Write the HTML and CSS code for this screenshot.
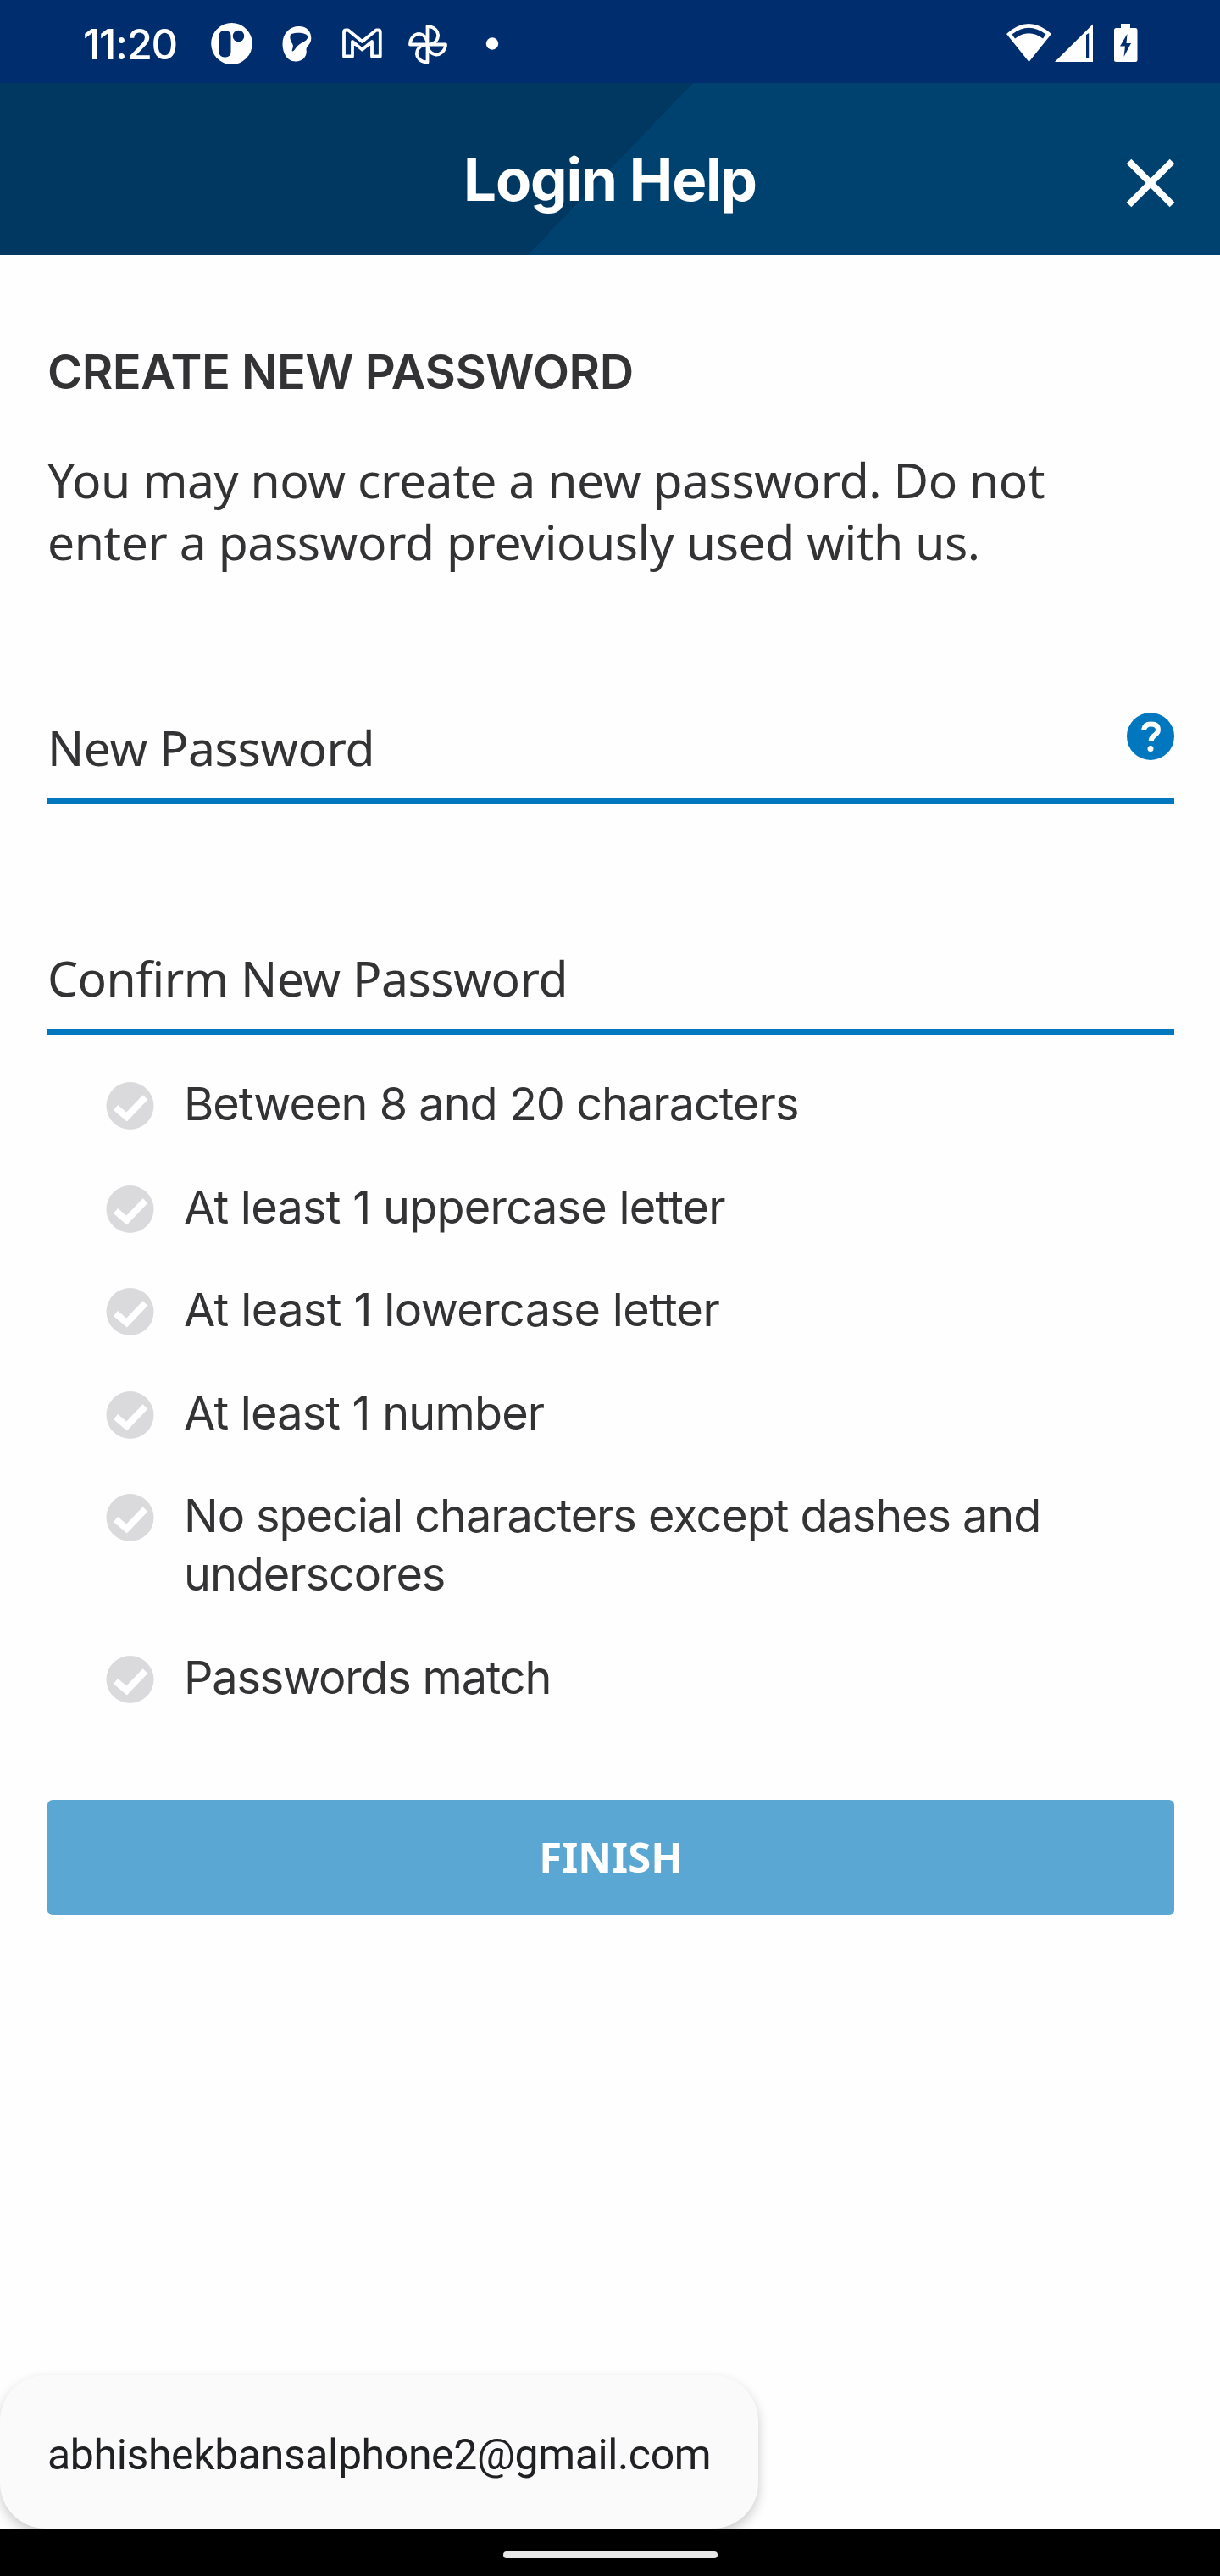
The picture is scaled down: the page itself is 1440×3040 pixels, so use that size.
FILE: index.html
```html
<!DOCTYPE html>
<html lang="en">
<head>
<meta charset="utf-8">
<title>Login Help</title>
<link rel="stylesheet" href="styles.css">
</head>
<body>
<div class="screen">
  <div class="status">
    <span class="clock">11:20</span>
    <svg class="status-left" width="350" height="98" viewBox="240 0 350 98" fill="none">
      <ellipse cx="273.500" cy="51.500" rx="24.300" ry="24.500" fill="#fff"/>
      <rect x="258.500" y="36" width="14" height="31.500" rx="6" fill="#002d6e"/>
      <circle cx="281.500" cy="42.500" r="6.800" fill="#002d6e"/>
      <path d="M353 31C362 31 367.300 37 367.300 45C367.300 52 362 54 361.500 58C363 66 358 72.500 349 72.500C338 72.500 333.500 61 333.500 52C333.500 39 342 31 353 31Z" fill="#fff"/>
      <path d="M344 40C351 38 361 38.500 363 42.500C364 48.500 357 49 352 53.500C349 56 347 61 345 60.500C343.500 59.500 347.500 55 345 51.500C342 47 341.500 41 344 40Z" fill="#002d6e"/>
      <path d="M406 66.500V38Q406 35.500 408.500 35.500H411L427.500 49L444 35.500H446.500Q448.800 35.500 448.800 38V66.500H439V49L427.500 58.500L416 49V66.500Z" stroke="#fff" stroke-width="3.800" stroke-linejoin="round"/>
      <path d="M504.500 52.500V31C513 31 518 38 517 43C516 49 511 52.500 504.500 52.500ZM504.500 52.500H526C526 60 519 65 514 64.500C508 63 504.500 59 504.500 52.500ZM504.500 52.500V73.500C496 73.500 491 67 492 62C493 56 498 52.500 504.500 52.500ZM504.500 52.500H484C484 45 490 39 496 40C501 41 504.500 46 504.500 52.500Z" stroke="#fff" stroke-width="3.800" stroke-linejoin="round"/>
      <circle cx="581" cy="51.500" r="7.200" fill="#fff"/>
    </svg>
    <svg class="status-right" width="156" height="98" viewBox="1187 0 156 98">
      <path d="M1188 40Q1214 16 1241 40L1214.500 73Z" fill="#fff"/>
      <path d="M1194.500 40.500Q1214 25 1234.500 40.500L1231 45.500Q1214 33 1198 45.500Z" fill="#002d6e"/>
      <path d="M1290 28.500V73H1245Z" fill="#fff"/>
      <path d="M1282 41L1285.200 39V68H1282Z" fill="#002d6e"/>
      <path d="M1323 28H1334V33H1340Q1342.500 33 1342.500 35.500V70.500Q1342.500 73 1340 73H1317.500Q1315 73 1315 70.500V35.500Q1315 33 1317.500 33H1323Z" fill="#fff"/>
      <path d="M1330.500 40L1322 54.500H1328L1326.500 67L1335 51H1329.500Z" fill="#002d6e"/>
    </svg>
  </div>
  <header class="header">
    <h1 class="title">Login Help</h1>
    <svg class="close" width="58" height="58" viewBox="0 0 58 58"><path d="M3.500 3.500L54.500 54.500M54.500 3.500L3.500 54.500" stroke="#fff" stroke-width="8"/></svg>
  </header>
  <main class="main">
    <h2 class="heading">CREATE NEW PASSWORD</h2>
    <p class="intro">You may now create a new password. Do not<br>enter a password previously used with us.</p>
    <div class="field">
      <span class="label">New Password</span>
      <svg class="help" width="56" height="56" viewBox="0 0 56 56"><circle cx="28" cy="28" r="28" fill="#0077bf"/><path d="M20 20.500Q21 13.500 28.500 13.500Q37 13.500 37 20.500C37 27 28.500 26 28.500 34" stroke="#fff" stroke-width="5.800" fill="none"/><circle cx="28" cy="42.500" r="3.500" fill="#fff"/></svg>
    </div>
    <div class="field confirm">
      <span class="label">Confirm New Password</span>
    </div>
    <svg width="0" height="0" class="defs"><symbol id="tick" viewBox="0 0 56 56"><circle cx="28" cy="28" r="28" fill="#dad9db"/><path d="M11 30L24 41L46 18" fill="none" stroke="#fff" stroke-width="8"/></symbol></svg>
    <ul class="rules">
      <li><svg class="tick"><use href="#tick"/></svg><span class="length">Between 8 and 20 characters</span></li>
      <li><svg class="tick"><use href="#tick"/></svg><span class="upper">At least 1 uppercase letter</span></li>
      <li><svg class="tick"><use href="#tick"/></svg><span class="lower">At least 1 lowercase letter</span></li>
      <li><svg class="tick"><use href="#tick"/></svg><span class="number">At least 1 number</span></li>
      <li><svg class="tick"><use href="#tick"/></svg><span class="special">No special characters except dashes and<br>underscores</span></li>
      <li><svg class="tick"><use href="#tick"/></svg><span class="match">Passwords match</span></li>
    </ul>
    <button class="finish">FINISH</button>
  </main>
  <div class="suggestion">abhishekbansalphone2@gmail.com</div>
  <div class="navbar"><div class="handle"></div></div>
</div>
</body>
</html>
```
FILE: styles.css
```css
* { box-sizing: border-box; margin: 0; padding: 0; }
body { background: #fefefe; color: #333335; font-family: "Noto Sans", sans-serif; }
.screen { position: relative; width: 1440px; height: 3040px; overflow: hidden; display: flex; flex-direction: column; }
.status { height: 98px; flex: none; background: #002d6e; display: flex; align-items: center; padding: 0 97px 0 98px; color: #fff; }
.clock { width: 142px; font: 500 49px/98px Inter, sans-serif; letter-spacing: -1.3px; padding-top: 8px; white-space: nowrap; }
.status-right { margin-left: auto; }
.header { height: 203px; flex: none; display: grid; grid-template-columns: 1fr auto 1fr; align-items: center; padding: 0 53px; color: #fff; background: linear-gradient(to bottom right, #003861 0 50%, #00426f 50%) 623px 0 / 195px 203px no-repeat, linear-gradient(90deg, #003861 623px, #00426f 623px); }
.title { grid-column: 2; font: 700 69px/84px Inter, sans-serif; letter-spacing: -1.2px; white-space: nowrap; padding-top: 24px; }
.close { justify-self: end; margin-top: 32px; }
.main { flex: 1; padding: 107px 54px 0 56px; }
.heading { font: 600 56px/62px Inter, sans-serif; letter-spacing: -.5px; white-space: nowrap; }
.intro { margin-top: 60px; margin-bottom: 160px; font-size: 57px; line-height: 73px; letter-spacing: -.44px; white-space: nowrap; }
.field { display: flex; justify-content: space-between; height: 113px; border-bottom: 7px solid #0077bf; white-space: nowrap; font-size: 57px; line-height: 80px; letter-spacing: -.47px; }
.label { padding-top: 6px; }
.help { margin-top: 5px; }
.confirm { margin-top: 159px; }
.defs { display: block; }
.rules { list-style: none; margin: 47px 0 0 69px; font: 400 54px/69px Inter, sans-serif; }
.rules li { display: flex; gap: 35px; margin-bottom: 52.600px; white-space: nowrap; }
.length { letter-spacing: -.98px; }
.upper { letter-spacing: -.73px; }
.lower { letter-spacing: -.6px; }
.number { letter-spacing: -.8px; }
.special { letter-spacing: -1.05px; }
.match { letter-spacing: -1.2px; }
.tick { width: 57px; height: 56px; flex: none; margin-top: 9px; }
.finish { display: block; width: 100%; height: 136px; margin-top: 110px; border: 0; border-radius: 6px; background: #5aa7d3; color: #fff; font: 700 49px/135px "Noto Sans", sans-serif; }
.suggestion { position: absolute; left: 0; top: 2803px; width: 895px; height: 181px; border-radius: 54px; background: #fafafa; box-shadow: 0 6px 14px rgba(0,0,0,.2); padding-left: 56px; font: 400 50px/189px Roboto, sans-serif; letter-spacing: -.38px; color: #202124; white-space: nowrap; }
.navbar { position: relative; height: 56px; flex: none; background: #000; display: flex; justify-content: center; padding-top: 27px; }
.handle { width: 253px; height: 8px; border-radius: 4px; background: #e8e8e8; }
```
